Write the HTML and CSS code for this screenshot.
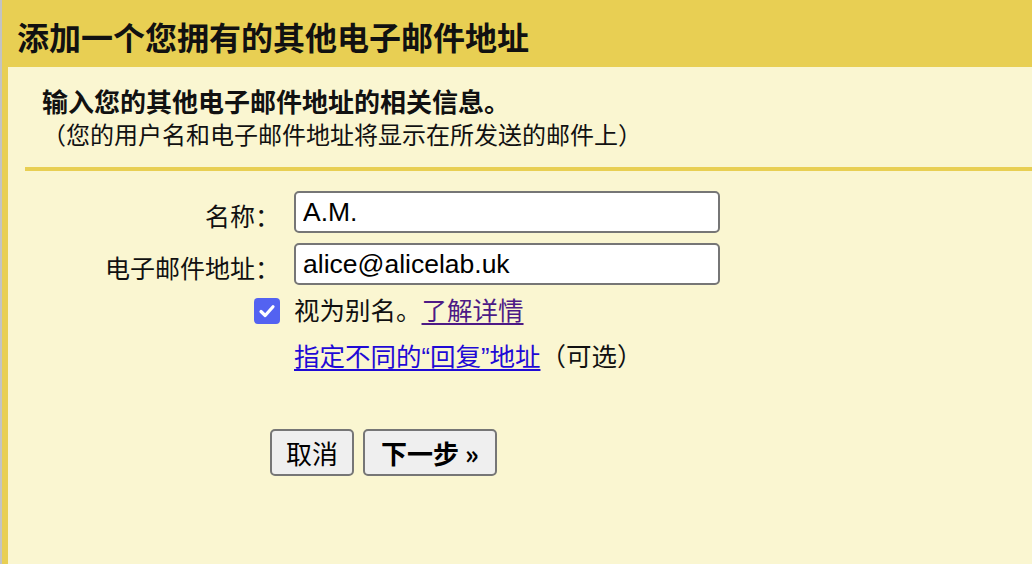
FILE: index.html
```html
<!DOCTYPE html>
<html lang="zh-CN">
<head>
<meta charset="utf-8">
<title>添加一个您拥有的其他电子邮件地址</title>
<link rel="stylesheet" href="styles.css">
</head>
<body>
<div class="frame">
  <div class="panel">
    <div class="panel-header">添加一个您拥有的其他电子邮件地址</div>
    <div class="panel-body">
      <div class="intro">
        <div class="intro-title">输入您的其他电子邮件地址的相关信息。</div>
        <div class="intro-note">（您的用户名和电子邮件地址将显示在所发送的邮件上）</div>
      </div>
      <div class="rule"></div>
      <div class="form">
        <label class="form-label" for="name">名称：</label>
        <input class="form-input" id="name" type="text" value="A.M.">
        <label class="form-label" for="email">电子邮件地址：</label>
        <input class="form-input" id="email" type="text" value="alice@alicelab.uk">
        <div class="check-cell">
          <span class="checkbox">
            <svg viewBox="0 0 26 26" width="26" height="26"><rect x="0" y="0" width="26" height="26" rx="4" fill="#5362f1"/><path d="M7 13.5 L11.2 17.5 L19 8.8" fill="none" stroke="#fff" stroke-width="3.2" stroke-linecap="round" stroke-linejoin="round"/></svg>
          </span>
        </div>
        <div class="check-text">视为别名。<a class="link visited" href="#">了解详情</a></div>
        <div class="spacer"></div>
        <div class="reply-text"><a class="link" href="#">指定不同的“回复”地址</a>（可选）</div>
      </div>
      <div class="actions">
        <button class="btn" type="button">取消</button>
        <button class="btn btn-primary" type="button">下一步 »</button>
      </div>
    </div>
  </div>
</div>
</body>
</html>
```
FILE: styles.css
```css
html, body {
  margin: 0;
  padding: 0;
  height: 100%;
}
body {
  font-family: "Liberation Sans", "Noto Sans CJK SC", sans-serif;
  color: #111;
  background: #faf6d1;
  overflow: hidden;
}
.frame {
  height: 564px;
  border-left: 2px solid #c3c3c3;
  box-sizing: border-box;
}
.panel {
  height: 100%;
  background: #e8cf53;
  display: flex;
  flex-direction: column;
  padding-left: 6px;
}
.panel-header {
  height: 67px;
  box-sizing: border-box;
  padding: 16px 0 0 15px;
  margin-left: -6px;
  font-family: "Noto Sans CJK SC", sans-serif;
  font-size: 32px;
  font-weight: 700;
  line-height: 40px;
  color: #111;
}
.panel-body {
  flex: 1;
  background: #faf6d1;
}
.intro {
  padding: 17px 0 0 34px;
  font-family: "Noto Sans CJK SC", sans-serif;
}
.intro-title {
  font-size: 26px;
  font-weight: 700;
  line-height: 33px;
}
.intro-note {
  font-size: 24px;
  line-height: 33px;
}
.rule {
  margin: 17px 0 0 17px;
  height: 4px;
  background: #e8cf53;
}
.form {
  display: grid;
  grid-template-columns: 272px 426px;
  column-gap: 14px;
  align-items: center;
  margin-top: 20px;
  font-family: "Liberation Sans", "Noto Sans CJK SC", sans-serif;
  font-size: 25px;
}
.form-label {
  text-align: right;
  line-height: 32px;
}
.form-input {
  box-sizing: border-box;
  height: 42px;
  width: 426px;
  margin: 0 0 10px 0;
  padding: 0 7px;
  border: 2px solid #767676;
  border-radius: 5px;
  background: #fff;
  font-family: "Liberation Sans", sans-serif;
  font-size: 26.5px;
  color: #000;
}
.check-cell {
  display: flex;
  justify-content: flex-end;
}
.checkbox {
  display: block;
  width: 26px;
  height: 26px;
}
.checkbox svg {
  display: block;
}
.check-text {
  font-size: 25.5px;
  line-height: 32px;
}
.reply-text {
  margin-top: 14px;
  font-size: 25.5px;
  line-height: 32px;
}
.link {
  color: #1f0ad6;
  text-decoration: underline;
  text-underline-offset: 3px;
}
.link.visited {
  color: #4d1a86;
}
.actions {
  display: flex;
  gap: 9px;
  margin: 56px 0 0 262px;
}
.btn {
  box-sizing: border-box;
  height: 47px;
  padding: 0 14px;
  border: 2px solid #767676;
  border-radius: 5px;
  background: #efefef;
  font-family: "Noto Sans CJK SC", sans-serif;
  font-size: 26px;
  color: #000;
}
.btn-primary {
  font-weight: 700;
  padding: 0 16px;
}
```
